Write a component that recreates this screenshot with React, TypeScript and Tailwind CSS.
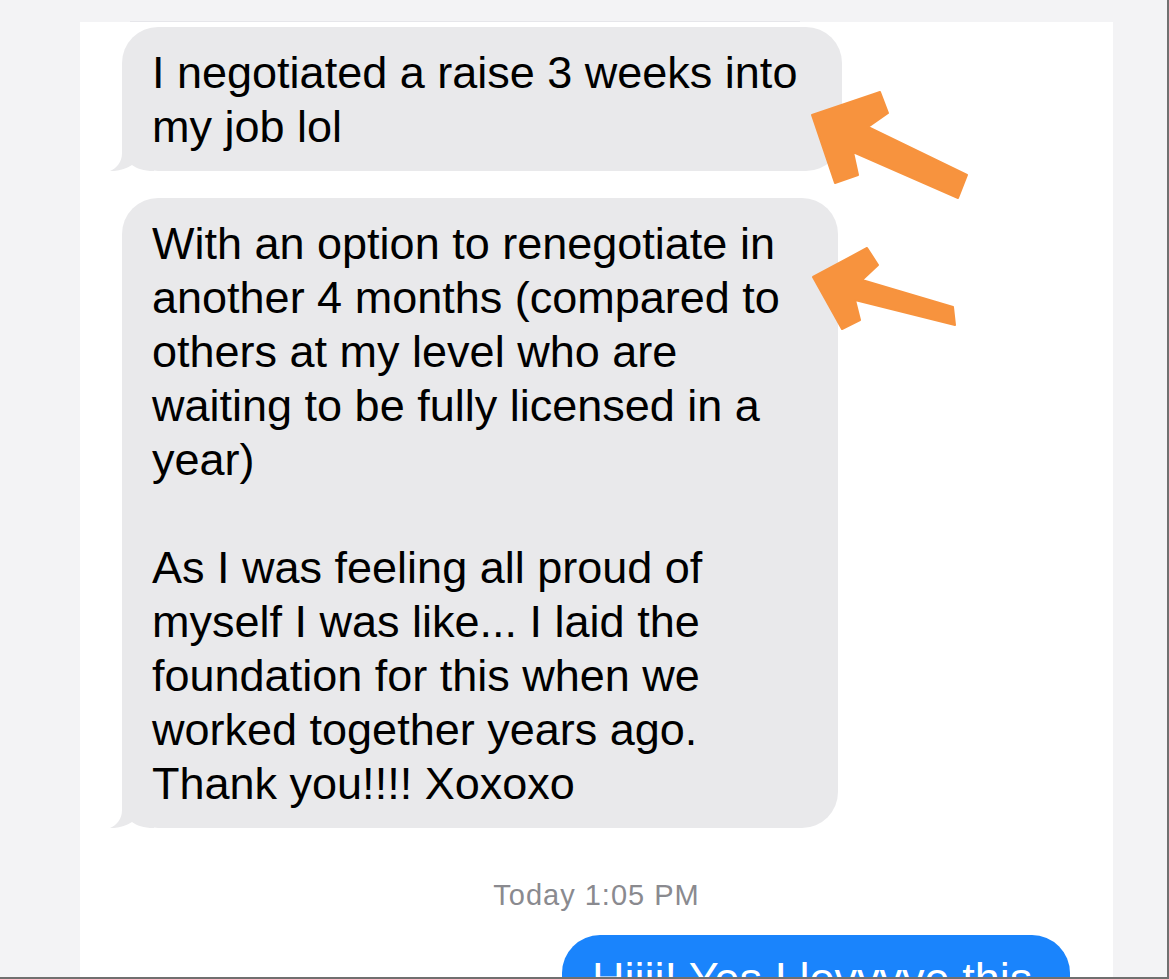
import React from 'react';

const FONT = { fontFamily: '"Liberation Sans", Arial, sans-serif' };

function Tail({ color }: { color: string }) {
  return (
    <svg className="absolute left-[-12px] bottom-0" width="44" height="40" viewBox="0 0 44 40">
      <path d="M12 0 L12 22 C12 31 7 37 0 40 C8 40.5 16 38 22 34 C27 37.5 33 40 44 40 L44 0 Z" fill={color} />
    </svg>
  );
}

function Bubble({ lines, width }: { lines: string[]; width: string }) {
  return (
    <div className={`relative ${width} rounded-[36px] bg-[#e9e9eb] pl-[30px] pt-[19px] pb-[17px] text-[45px] leading-[54px] text-black`}>
      <Tail color="#e9e9eb" />
      <div className="relative">
        {lines.map((l, i) => (
          <div key={i} className="whitespace-nowrap h-[54px]">{l || '\u00a0'}</div>
        ))}
      </div>
    </div>
  );
}

export default function App() {
  return (
    <div style={FONT} className="relative w-[1169px] h-[979px] overflow-hidden bg-[#f3f3f5] border-r-2 border-b-2 border-[#707070] flex flex-col">
      {/* strip of the previous screenshot */}
      <div className="h-[22px] shrink-0 flex items-end pl-[130px]">
        <div className="w-[670px] h-px bg-[#e6e6ea]" />
      </div>

      <div className="ml-[80px] w-[1033px] flex-1 bg-white flex flex-col">
        <div className="pl-[42px] pt-[5px] flex flex-col gap-[27px]">
          <Bubble width="w-[720px]" lines={['I negotiated a raise 3 weeks into', 'my job lol']} />
          <Bubble
            width="w-[716px]"
            lines={[
              'With an option to renegotiate in',
              'another 4 months (compared to',
              'others at my level who are',
              'waiting to be fully licensed in a',
              'year)',
              '',
              'As I was feeling all proud of',
              'myself I was like... I laid the',
              'foundation for this when we',
              'worked together years ago.',
              'Thank you!!!! Xoxoxo',
            ]}
          />
        </div>

        <div className="mt-[47px] h-[40px] leading-[40px] text-center text-[29px] tracking-[1px] text-[#8a8a8f]">
          Today 1:05 PM
        </div>

        <div className="mt-[20px] ml-auto mr-[43px] w-[508px] rounded-[38px] bg-[#1a84fc] pl-[30px] pt-[17px] pb-[17px] text-[45px] leading-[54px] text-white whitespace-nowrap">
          Hiiii! Yes I lovvvve this
        </div>
      </div>

      {/* orange annotation arrows */}
      <svg className="absolute left-0 top-0 pointer-events-none" width="1169" height="979">
        <polygon
          points="812,115 880,92 888,113 868,127 967,175 958,198 853,152 858,175 835,183"
          fill="#f7933e"
          strokeLinejoin="round"
          stroke="#f7933e"
          strokeWidth="2"
        />
        <polygon
          points="813,277 867,248 878,265 862,280 953,307 955,325 855,300 860,320 842,329"
          fill="#f7933e"
          strokeLinejoin="round"
          stroke="#f7933e"
          strokeWidth="2"
        />
      </svg>
    </div>
  );
}
